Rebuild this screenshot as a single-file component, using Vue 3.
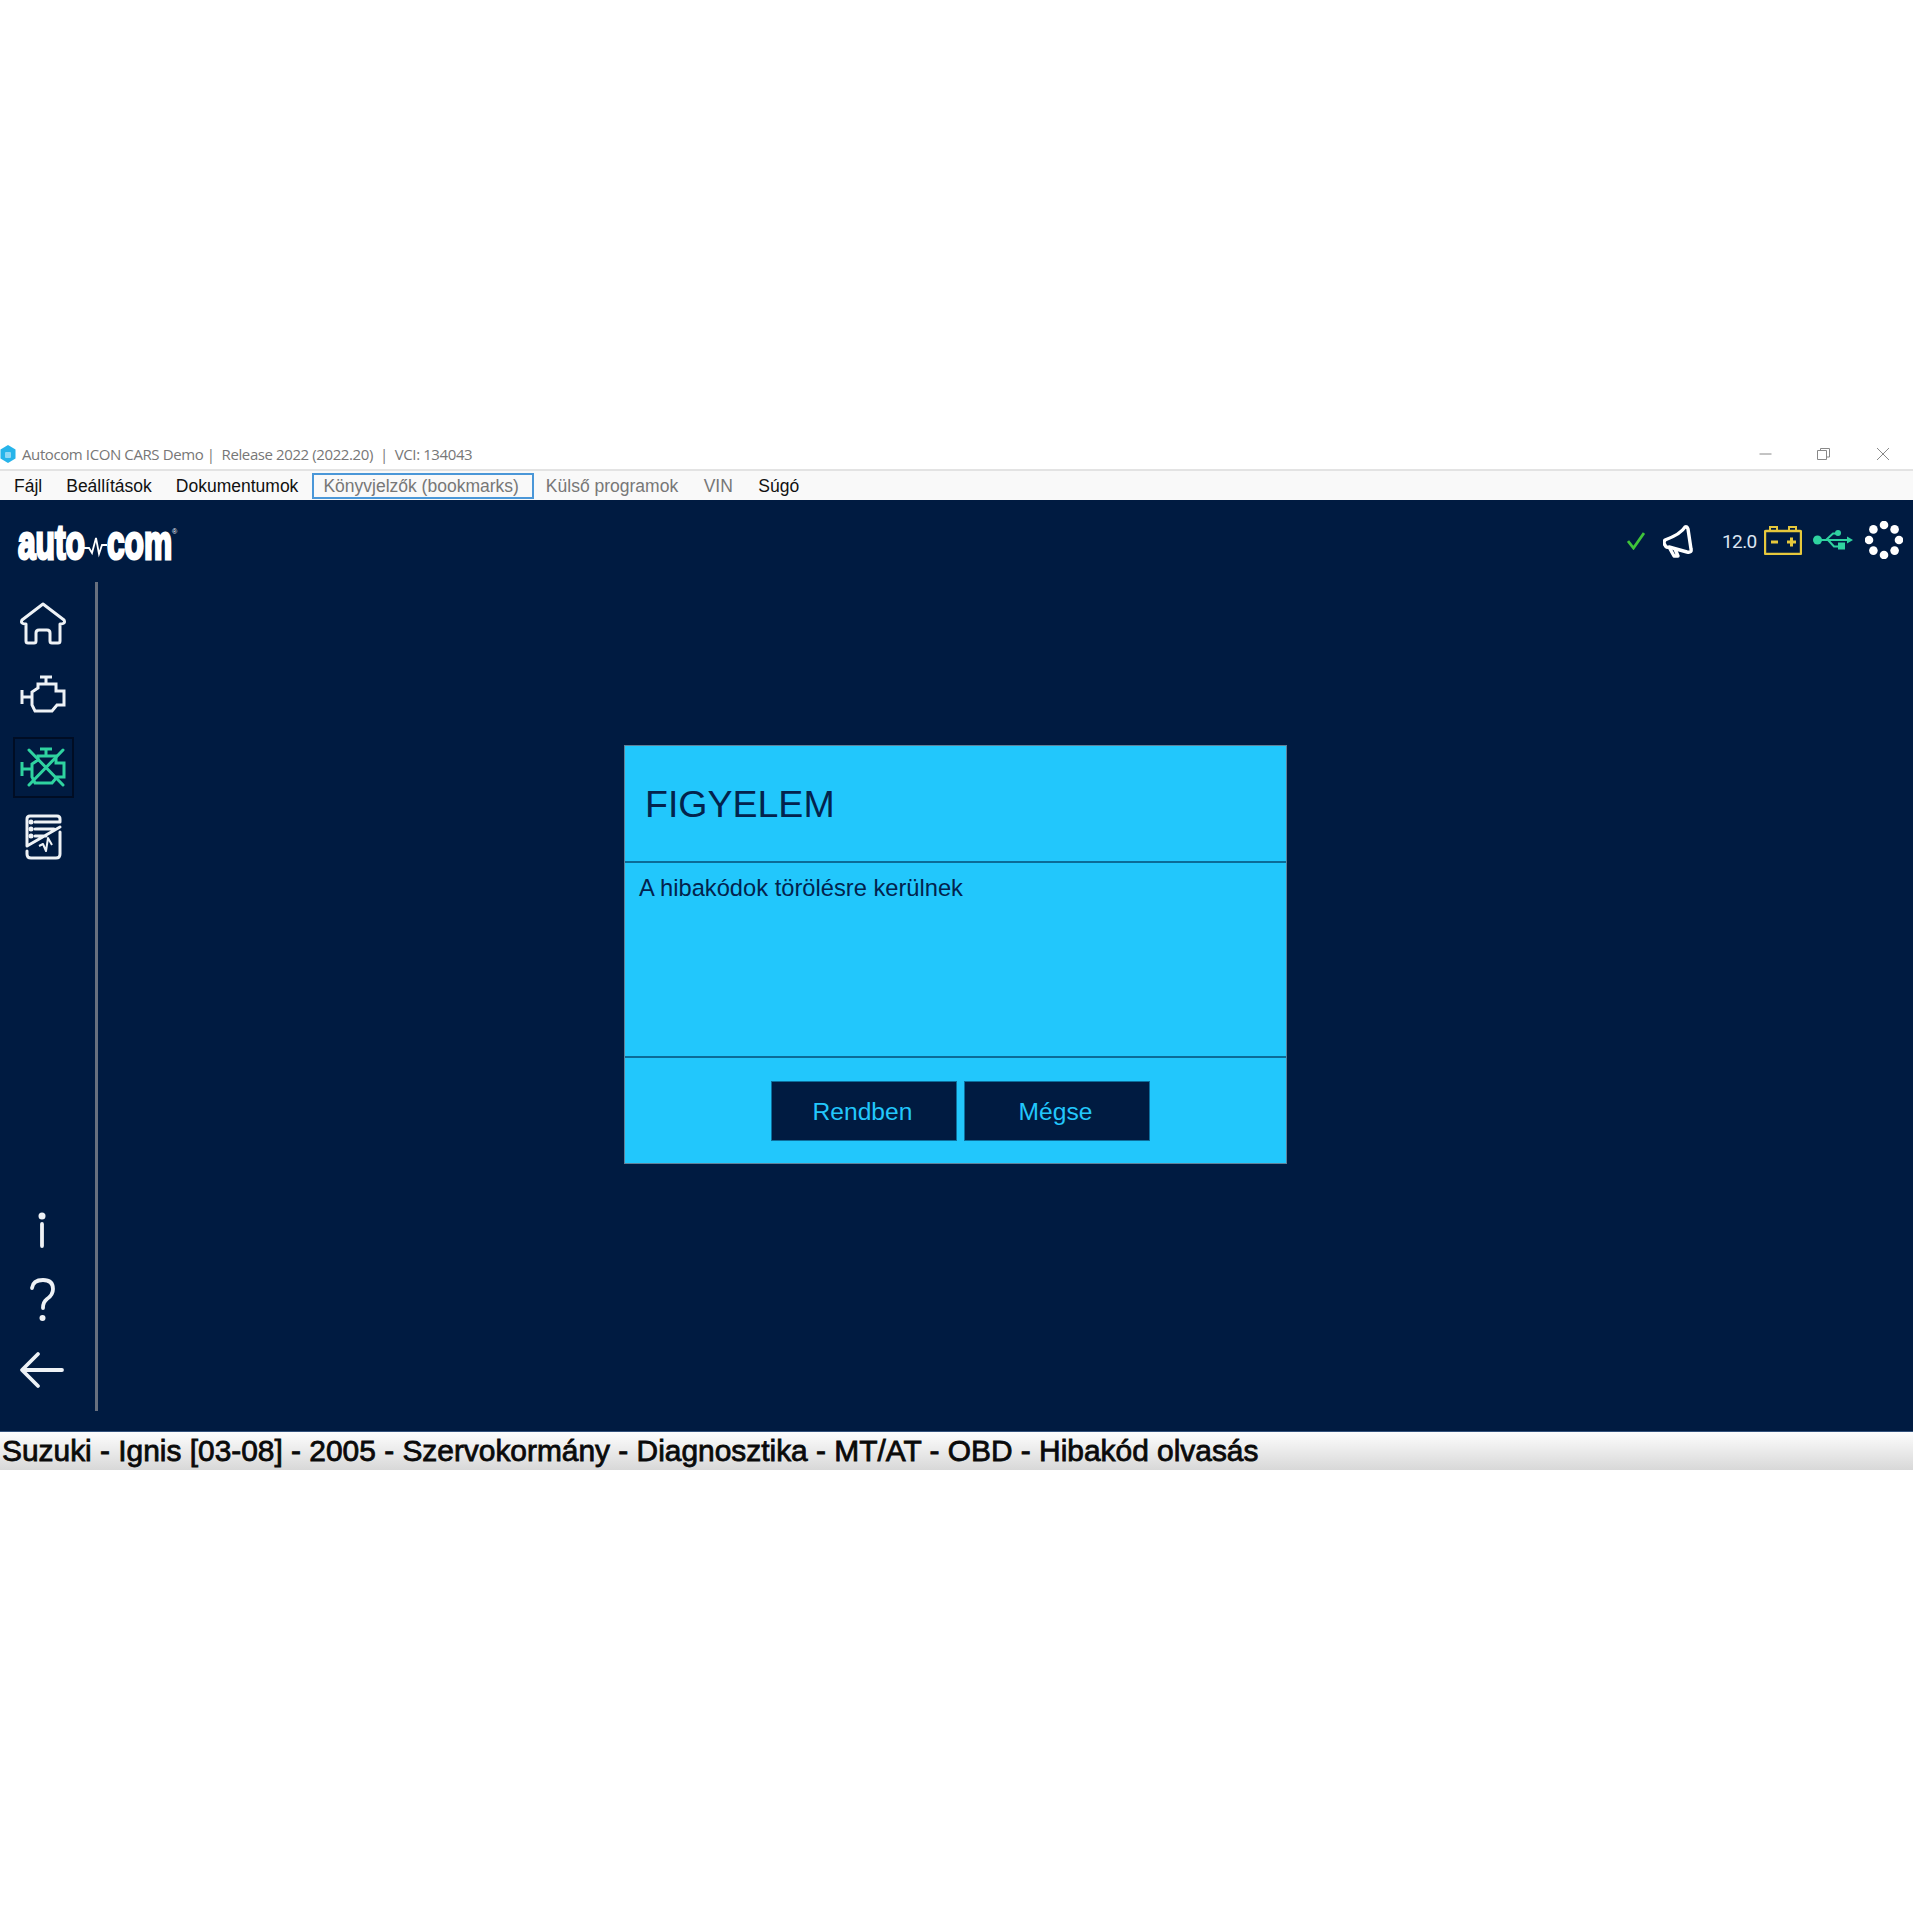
<script setup>
const menu = [
  { label: 'Fájl' },
  { label: 'Beállítások' },
  { label: 'Dokumentumok' },
  { label: 'Könyvjelzők (bookmarks)', muted: true, focused: true },
  { label: 'Külső programok', muted: true },
  { label: 'VIN', muted: true },
  { label: 'Súgó' }
]
const dots = Array.from({ length: 8 }, (_, i) => {
  const a = (i * Math.PI) / 4
  return { x: 19 + 15 * Math.sin(a), y: 19 - 15 * Math.cos(a) }
})
const enginePath = 'M26 10H38M32 10V17M24 17H42V24H50V38H43L38 44H21L18 38V25L24 21ZM8 23V37M8 30H18'
</script>

<template>
  <div class="page">
    <div class="titlebar">
      <svg class="app-icon" viewBox="0 0 16 18" width="16" height="18">
        <path d="M8 0L15.500 4.500V13.500L8 18L.5 13.500V4.500Z" fill="#27b4ea" />
        <rect x="5" y="7" width="6" height="6" rx="1" fill="#8fd8f5" />
      </svg>
      <span class="title">Autocom ICON CARS Demo |&nbsp; Release 2022 (2022.20) &nbsp;|&nbsp; VCI: 134043</span>
      <div class="win-controls">
        <svg viewBox="0 0 153 14" width="153" height="14">
          <path d="M.5 7H12.500" stroke="#888" fill="none" />
          <path d="M58.500 3.500H67.500V12.500H58.500ZM61.500 3.500V1.500H70.500V10H67.500" stroke="#888" fill="none" />
          <path d="M118 1L130 13M130 1L118 13" stroke="#888" fill="none" />
        </svg>
      </div>
    </div>

    <nav class="menu">
      <span
        v-for="item in menu"
        :key="item.label"
        class="menu-item"
        :class="{ muted: item.muted, focused: item.focused }"
      >{{ item.label }}</span>
    </nav>

    <div class="app">
      <header class="top">
        <div class="logo">
          <span class="logo-word"><span>auto</span></span>
          <svg class="pulse" viewBox="0 0 23 30" width="23" height="30">
            <path d="M0 18L5 18L8 23L12 8L15 24L18 15L23 15" fill="none" stroke="#fff" stroke-width="1.800" />
          </svg>
          <span class="logo-word"><span>com</span></span>
          <span class="reg">®</span>
        </div>
        <div class="status-icons">
          <svg class="check" viewBox="0 0 18 18" width="18" height="18">
            <path d="M1 9L6.500 16L17 1" fill="none" stroke="#3fc43a" stroke-width="2.800" />
          </svg>
          <svg class="horn" viewBox="0 0 30 33" width="30" height="33">
            <path d="M22 2Q18 9 2 15Q0 18 2 20Q3 23 6 22L24 27Q29 28 28 24L25 4Q24 1 22 2Z" fill="none" stroke="#fff" stroke-width="3.400" stroke-linejoin="round" />
            <path d="M6 22L11 31H15L12 24" fill="none" stroke="#fff" stroke-width="3.400" stroke-linejoin="round" />
          </svg>
          <span class="volt">12.0</span>
          <svg class="battery" viewBox="0 0 38 30" width="38" height="30">
            <path d="M6 6V2H13V6M25 6V2H32V6" fill="none" stroke="#e6c83c" stroke-width="2" />
            <rect x="1" y="6" width="36" height="23" rx="1" fill="none" stroke="#e6c83c" stroke-width="2.400" />
            <path d="M7 17H14M23 17H32M27.500 12.500V21.500" fill="none" stroke="#e6c83c" stroke-width="3" />
          </svg>
          <svg class="usb" viewBox="0 0 40 20" width="40" height="20">
            <circle cx="4.500" cy="10" r="4.500" fill="#2fd3a0" />
            <path d="M6 10H36M13 10L20 3.500H24M15 10L21 16.500H27" fill="none" stroke="#2fd3a0" stroke-width="2" />
            <path d="M34 6.500L40 10L34 13.500Z" fill="#2fd3a0" />
            <circle cx="25" cy="3" r="3" fill="#2fd3a0" />
            <rect x="25" y="12.500" width="7" height="7" fill="#2fd3a0" />
          </svg>
          <svg class="spinner" viewBox="0 0 38 38" width="38" height="38">
            <circle v-for="(d, i) in dots" :key="i" :cx="d.x" :cy="d.y" r="4.300" fill="#fff" />
          </svg>
        </div>
      </header>

      <div class="body">
        <aside class="side">
          <div class="side-group">
            <div class="side-btn">
              <svg viewBox="0 0 59 59" width="59" height="59">
                <path class="ln" d="M29 8L50 24Q52 28 46 28V45Q46 47 44 47H38Q36 47 36 45V37Q36 34 33 34H25Q22 34 22 37V45Q22 47 20 47H14Q12 47 12 45V28Q6 28 8 24Z" />
              </svg>
            </div>
            <div class="side-btn">
              <svg viewBox="0 0 59 59" width="59" height="59">
                <path class="ln sharp" :d="enginePath" />
              </svg>
            </div>
            <div class="side-btn active">
              <svg viewBox="0 0 59 59" width="59" height="59">
                <g transform="translate(0 1)">
                  <path class="ln sharp green" :d="enginePath" />
                  <path class="ln green" d="M15 11L49 46M49 11L15 46" />
                </g>
              </svg>
            </div>
            <div class="side-btn">
              <svg viewBox="0 0 59 59" width="59" height="59">
                <path class="ln" d="M13 37V10Q13 7 16 7H43Q46 7 46 10V13M21 13H46M21 20H40M21 27H32M13 37L46 18" />
                <circle cx="17" cy="13" r="2.500" fill="#eef2f6" />
                <circle cx="17" cy="20" r="2.500" fill="#eef2f6" />
                <circle cx="17" cy="27" r="2.500" fill="#eef2f6" />
                <path class="ln" d="M46 23V45Q46 49 42 49H17Q13 49 13 45V42" />
                <path class="thin" d="M25 37L29 35L32 42L34 29L38 36" />
              </svg>
            </div>
          </div>
          <div class="side-group">
            <div class="side-btn">
              <svg viewBox="0 0 59 59" width="59" height="59">
                <circle cx="28" cy="17" r="3.500" fill="#eef2f6" />
                <path class="ln thick" d="M28 25V47" />
              </svg>
            </div>
            <div class="side-btn">
              <svg viewBox="0 0 59 59" width="59" height="59">
                <path class="ln thick" d="M18 18Q19 10 29 10Q39 10 39 19Q39 25 33 29Q29 32 29 38" />
                <circle cx="28.500" cy="48" r="3" fill="#eef2f6" />
              </svg>
            </div>
            <div class="side-btn">
              <svg viewBox="0 0 59 59" width="59" height="59">
                <path class="ln thick" d="M48 29H9M24 13L8 29L24 45" />
              </svg>
            </div>
          </div>
        </aside>

        <main class="stage">
          <section class="dialog">
            <h1 class="dlg-title">FIGYELEM</h1>
            <p class="dlg-text">A hibakódok törölésre kerülnek</p>
            <div class="dlg-actions">
              <button class="dlg-btn">Rendben</button>
              <button class="dlg-btn">Mégse</button>
            </div>
          </section>
        </main>
      </div>
    </div>

    <footer class="crumb">Suzuki - Ignis [03-08] - 2005 - Szervokormány - Diagnosztika - MT/AT - OBD - Hibakód olvasás</footer>
  </div>
</template>

<style>
html, body { margin: 0; background: #fff; }
</style>

<style scoped>
.page {
  width: 1913px;
  height: 1913px;
  padding-top: 444px;
  box-sizing: border-box;
  background: #fff;
  font-family: "Liberation Sans", Arial, sans-serif;
}
.titlebar {
  height: 27px;
  padding-bottom: 6px;
  display: flex;
  align-items: center;
  border-bottom: 2px solid #e3e3e3;
  box-sizing: border-box;
}
.app-icon { flex: none; }
.title {
  margin-left: 6px;
  font-family: "Open Sans", sans-serif;
  font-size: 15px;
  letter-spacing: -0.4px;
  color: #777;
  white-space: pre;
}
.win-controls {
  margin-left: auto;
  margin-right: 1px;
  display: flex;
}
.menu {
  height: 29px;
  display: flex;
  align-items: center;
  padding-left: 2px;
  background: #f9f9f9;
}
.menu-item {
  height: 26px;
  line-height: 24px;
  padding: 0 11px;
  box-sizing: border-box;
  font-size: 17.500px;
  color: #111;
  border: 1px solid transparent;
}
.menu-item.muted { color: #777; margin-right: 1.500px; }
.menu-item.focused {
  border: 2px solid #4a97d8;
  line-height: 22px;
  margin: 0 0 0 2px;
  padding: 0 13px 0 9px;
}
.app {
  height: 931px;
  background: #001b41;
}
.top {
  height: 82px;
  display: flex;
  align-items: center;
  justify-content: space-between;
  padding: 0 10px 0 18px;
}
.logo {
  display: flex;
  align-items: center;
  height: 40px;
  margin-top: 4px;
}
.logo-word {
  display: block;
  width: 66px;
  color: #fff;
  font-size: 48px;
  font-weight: 700;
  line-height: 40px;
  white-space: nowrap;
  -webkit-text-stroke: 3px #fff;
}
.logo-word span {
  display: inline-block;
  transform: scaleX(0.66);
  transform-origin: left center;
}
.pulse { margin: 4px 0 0; flex: none; }
.reg { color: #fff; font-size: 7px; align-self: flex-start; margin: 5px 0 0 -1px; }
.status-icons { display: flex; align-items: center; }
.horn { margin-left: 18px; }
.volt {
  margin-left: 29px;
  color: #dde6f2;
  font-family: Roboto, sans-serif;
  font-size: 19px;
  letter-spacing: -0.6px;
  width: 34px;
  white-space: nowrap;
}
.battery { margin: -2px 0 0 8px; }
.usb { margin: -2px 0 0 11px; }
.spinner { margin: -3px 0 0 12px; }
.body { display: flex; height: 829px; }
.side {
  width: 98px;
  flex: none;
  box-sizing: border-box;
  padding: 14px 0 11px 14px;
  border-right: 3px solid #68707e;
  display: flex;
  flex-direction: column;
  justify-content: space-between;
}
.side-group { display: flex; flex-direction: column; gap: 12px; }
.side-btn { width: 59px; height: 59px; box-sizing: border-box; }
.side-btn svg { display: block; }
.side-btn.active { outline: 2px solid #000d24; outline-offset: -1px; }
.ln { fill: none; stroke: #eef2f6; stroke-width: 3; stroke-linecap: round; stroke-linejoin: round; }
.ln.sharp { stroke-linejoin: miter; stroke-linecap: butt; }
.ln.thick { stroke-width: 3.800; }
.ln.green { stroke: #2fd3a0; }
.thin { fill: none; stroke: #eef2f6; stroke-width: 2; stroke-linejoin: round; }
.stage { flex: 1; padding: 163px 0 0 526px; }
.dialog {
  width: 663px;
  height: 419px;
  box-sizing: border-box;
  background: #22c7fc;
  border: 1px solid #5f8199;
  display: flex;
  flex-direction: column;
}
.dlg-title {
  margin: 0;
  height: 117px;
  flex: none;
  display: flex;
  align-items: center;
  padding: 1px 0 0 20px;
  box-sizing: border-box;
  font-size: 37.500px;
  font-weight: 400;
  color: #03234d;
  border-bottom: 2px solid #0b6c98;
}
.dlg-text {
  margin: 0;
  height: 195px;
  flex: none;
  padding: 12px 0 0 14px;
  box-sizing: border-box;
  font-size: 23.700px;
  color: #03234d;
  border-bottom: 2px solid #0b6c98;
}
.dlg-actions {
  flex: 1;
  display: flex;
  gap: 7px;
  padding: 23px 0 0 146px;
}
.dlg-btn {
  width: 186px;
  height: 60px;
  background: #001b41;
  border: 1px solid #0d6f9d;
  color: #22c7fc;
  font-family: "Liberation Sans", Arial, sans-serif;
  font-size: 24.600px;
  padding: 2px 3px 0 0;
}
.crumb {
  height: 39px;
  box-sizing: border-box;
  line-height: 38px;
  padding-left: 2px;
  font-size: 29.900px;
  font-weight: 400;
  -webkit-text-stroke: 0.8px #0a0a0a;
  color: #0a0a0a;
  white-space: nowrap;
  background: linear-gradient(#fdfdfd, #d8d8d8);
  border-top: 1px solid #33527c;
}
</style>
